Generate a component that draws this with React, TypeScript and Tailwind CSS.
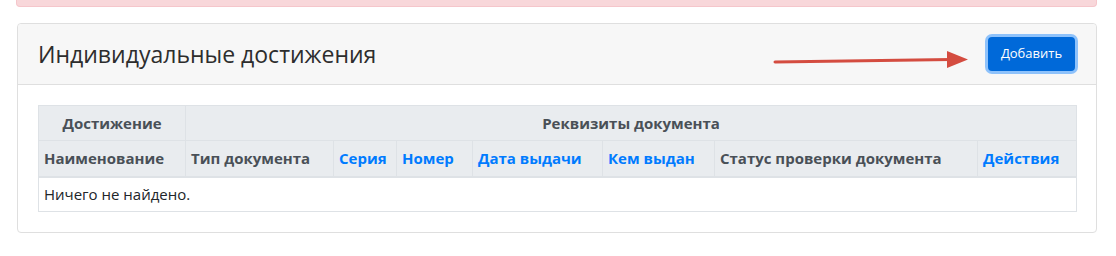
import React from 'react';

// Column widths measured from the table grid
const columns = [
  { title: 'Наименование', width: 147, link: false },
  { title: 'Тип документа', width: 148, link: false },
  { title: 'Серия', width: 63, link: true },
  { title: 'Номер', width: 76, link: true },
  { title: 'Дата выдачи', width: 130, link: true },
  { title: 'Кем выдан', width: 112, link: true },
  { title: 'Статус проверки документа', width: 263, link: false },
  { title: 'Действия', width: 99, link: true },
];

const Arrow: React.FC = () => (
  <svg className="absolute left-[741px] top-[26px]" width="215" height="20" viewBox="0 0 215 20">
    <line x1="16" y1="12" x2="192" y2="9.6" stroke="#d44c40" strokeWidth="3" strokeLinecap="round" />
    <polygon points="188,1 209,9.4 188,18" fill="#d44c40" />
  </svg>
);

export default function App() {
  return (
    <div className="w-[1116px] h-[256px] bg-white text-[#212529]" style={{ fontFamily: '"Open Sans", "Noto Sans", sans-serif' }}>
      {/* alert remainder at top */}
      <div className="ml-[16px] w-[1081px] h-[7px] bg-[#f8d7da] border-b border-x border-[#f5c6cb] rounded-b-[4px]" />

      <div className="mt-[16px] ml-[17px] w-[1080px] border border-[#dfdfdf] rounded-[4px] relative">
        <div className="h-[61px] bg-[#f7f7f7] border-b border-[#dfdfdf] rounded-t-[4px] flex items-center justify-between px-[20px]">
          <h4 className="text-[23px] text-[#2d2d2d] font-normal leading-none">Индивидуальные достижения</h4>
          <button className="h-[34px] w-[87px] mr-[1px] rounded-[4px] bg-[#0069d9] text-white text-[13px] ring-[3px] ring-[#8ec2fb]">
            Добавить
          </button>
          <Arrow />
        </div>

        <div className="p-[20px]">
          <table className="table-fixed border-collapse w-[1038px] text-[15px]">
            <colgroup>
              {columns.map((c) => (
                <col key={c.title} style={{ width: c.width }} />
              ))}
            </colgroup>
            <thead className="bg-[#e9ecef] text-[#495057] font-bold">
              <tr className="h-[35px]">
                <th className="border border-[#dee2e6] text-center font-bold">Достижение</th>
                <th colSpan={7} className="border border-[#dee2e6] text-center font-bold">
                  Реквизиты документа
                </th>
              </tr>
              <tr className="h-[36px]">
                {columns.map((c) => (
                  <th
                    key={c.title}
                    className={`border border-b-2 border-[#dee2e6] text-left pl-[5px] font-bold whitespace-nowrap ${c.link ? 'text-[#007bff]' : ''}`}
                  >
                    {c.title}
                  </th>
                ))}
              </tr>
            </thead>
            <tbody>
              <tr className="h-[35px]">
                <td colSpan={8} className="border border-[#dee2e6] pl-[5px]">
                  Ничего не найдено.
                </td>
              </tr>
            </tbody>
          </table>
        </div>
      </div>
    </div>
  );
}
